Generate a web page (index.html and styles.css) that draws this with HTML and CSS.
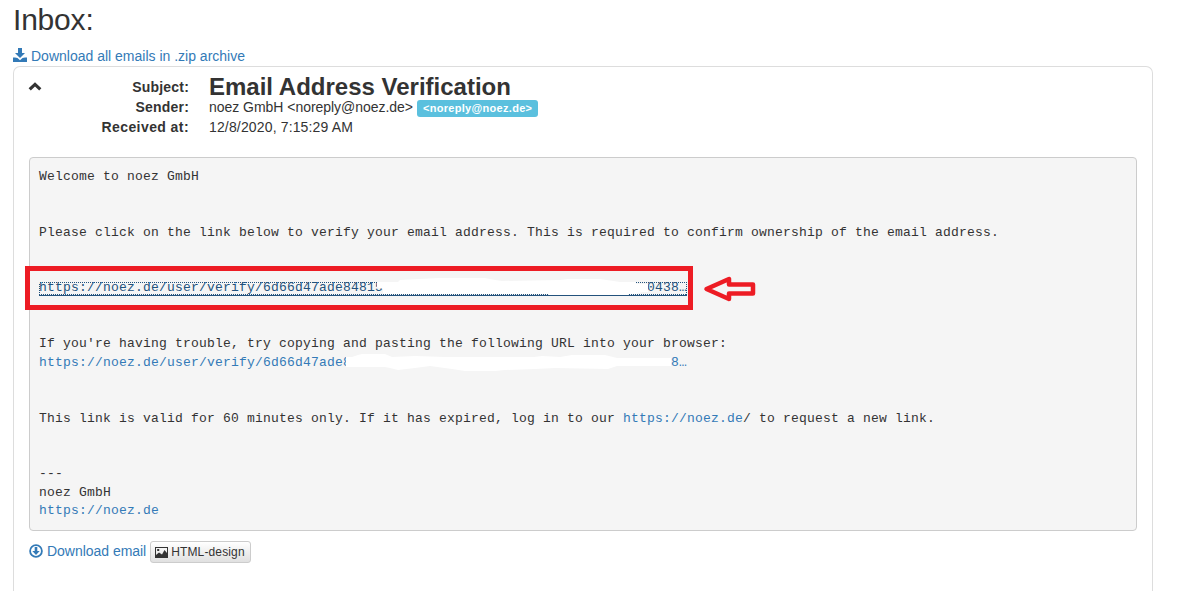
FILE: index.html
```
<!DOCTYPE html>
<html lang="en">
<head>
<meta charset="utf-8">
<title>Inbox</title>
<link rel="stylesheet" href="styles.css">
</head>
<body>
<main class="page">
  <h1 class="title">Inbox:</h1>
  <a class="link archive"><svg class="icon" viewBox="0 0 14 14"><path d="M5 0h4v5h3L7 10 2 5h3zM0 9.500h2L4.500 10 7 12.300 9.500 10 12 9.500h2V14H0z"/></svg><span class="archive-text">Download all emails in .zip archive</span></a>
  <section class="card">
    <header class="head">
      <svg class="chevron" viewBox="0 0 14 9"><path d="M7 0.2 13.4 6.3 11.2 8.4 7 4.6 2.8 8.4.6 6.3z"/></svg>
      <dl class="meta">
        <dt>Subject:</dt><dd class="subject">Email Address Verification</dd>
        <dt>Sender:</dt><dd class="sender"><span class="from">noez GmbH &lt;noreply@noez.de&gt;</span><span class="label">&lt;noreply@noez.de&gt;</span></dd>
        <dt class="received">Received at:</dt><dd class="date">12/8/2020, 7:15:29 AM</dd>
      </dl>
    </header>
    <div class="message">
<pre class="body">Welcome to noez GmbH


Please click on the link below to verify your email address. This is required to confirm ownership of the email address.


<a class="link focused">https://noez.de/user/verify/6d66d47ade84815<span class="gap gap-focused"></span>0438…</a>


If you're having trouble, try copying and pasting the following URL into your browser:
<a class="link">https://noez.de/user/verify/6d66d47ade8<span class="gap gap-plain"></span>8…</a>


This link is valid for 60 minutes only. If it has expired, log in to our <a class="link">https://noez.de</a>/ to request a new link.


---
noez GmbH
<a class="link">https://noez.de</a>
</pre>
      <svg class="marks" viewBox="29 157 1108 374">
        <rect class="focus-ring" x="39.500" y="282.500" width="647" height="12"/>
        <path class="cover" d="M377 282H398L400 280 439 278H485L495 280 502 281 560 280 568 279H600L620 282H636V284H648V292H642L636 294H628V295H549V294H383V289L377 287z"/>
        <path class="cover" d="M346 357H352L358 355 362 354H385L392 357 415 356 445 357H534L542 356 560 357 572 355H605L617 358H671V366H617L608 369 555 368 535 369 505 370 495 371H465L452 369 430 366 415 368 398 370 390 368 385 367H346z"/>
        <path class="underline" d="M39 295.500H687"/>
        <rect class="frame" x="27.5" y="268.5" width="663" height="39"/>
        <path class="arrow" d="M706.500 289 729 279V284.500H753V293.500H729V299z"/>
      </svg>
    </div>
    <footer class="actions">
      <a class="link download"><svg class="icon" viewBox="0 0 14 14"><circle class="ring" cx="7" cy="7" r="5.900"/><path d="M5.700 3h2.600v4h2.400L7 11 3.300 7h2.400z"/></svg><span class="download-text">Download email</span></a>
      <button class="button"><svg class="picture" viewBox="0 0 13 11"><path fill-rule="evenodd" d="M0 0h13v11H0zM1 1v7l3-2.500 3 2L9.500 3 12 6V1zM2.200 2h2v2h-2z"/></svg><span class="button-text">HTML-design</span></button>
    </footer>
  </section>
</main>
</body>
</html>
```
FILE: styles.css
```
* { box-sizing: border-box; }
html, body { margin: 0; height: 591px; overflow: hidden; }
body { background: #fff; color: #333; font: 14px/20px "Liberation Sans", Arial, sans-serif; }
.page { padding: 0 28px 0 13px; }
.title { margin: 0; height: 46px; font-size: 30px; line-height: 40px; font-weight: 400; letter-spacing: -0.2px; }
.link { color: #337ab7; text-decoration: none; }
.archive { display: flex; align-items: center; height: 20px; gap: 4px; }
.icon { width: 14px; height: 14px; fill: #337ab7; flex: none; }
.archive .icon { margin-top: -2px; }
.ring { fill: none; stroke: #337ab7; stroke-width: 1.8; }
.card { height: 525px; border: 1px solid #ddd; border-bottom: 0; border-radius: 7px 7px 0 0; padding: 0 15px; }
.head { display: flex; height: 90px; padding-top: 10px; }
.chevron { width: 14px; height: 9px; margin: 5px 1px 0 -1px; fill: #333; flex: none; }
.meta { display: grid; grid-template-columns: 146px 1fr; grid-auto-rows: 20px; column-gap: 20px; margin: 0; }
.meta dt { text-align: right; font-weight: 700; letter-spacing: 0.2px; }
.meta .received { letter-spacing: 0.42px; }
.meta dd { margin: 0; white-space: nowrap; }
.meta .subject { font-size: 24px; font-weight: 700; }
.meta .date { letter-spacing: 0.15px; }
.sender { display: flex; align-items: center; gap: 4px; }
.from { letter-spacing: -0.035px; }
.label { width: 121px; height: 17px; padding: 0 6px; border-radius: 3px; background: #5bc0de; color: #fff; font-size: 11px; line-height: 17px; font-weight: 700; letter-spacing: 0.3px; margin-top: 2px; }
.message { position: relative; height: 374px; }
.body { margin: 0; height: 374px; padding: 10px 9px 8px; border: 1px solid #ccc; border-radius: 4px; background: #f5f5f5; font: 13px/18.571px "Liberation Mono", "Courier New", monospace; letter-spacing: 0.199px; }
.focused { color: #23527c; }
.gap { display: inline-block; height: 1px; }
.gap-focused { width: 264px; }
.gap-plain { width: 320px; }
.marks { position: absolute; inset: 0; width: 1108px; height: 374px; overflow: visible; }
.focus-ring { fill: none; stroke: #23527c; stroke-dasharray: 1 1; shape-rendering: crispEdges; }
.underline { stroke: #23527c; }
.cover { fill: #fff; }
.frame { fill: none; stroke: #ed1c24; stroke-width: 5; }
.arrow { fill: none; stroke: #ed1c24; stroke-width: 4.500; stroke-linejoin: round; }
.actions { display: flex; align-items: center; gap: 4px; padding-top: 10px; }
.download { display: flex; align-items: center; gap: 4px; letter-spacing: -0.03px; margin-top: -2px; }
.button { display: flex; align-items: center; gap: 3px; height: 22px; width: 101px; padding: 0 4px; border: 1px solid #ccc; border-radius: 3px; background: linear-gradient(#fff, #e0e0e0); color: #333; font: 12px/18px "Liberation Sans", Arial, sans-serif; letter-spacing: 0.14px; white-space: nowrap; }
.picture { width: 13px; height: 11px; fill: #333; flex: none; }
```
